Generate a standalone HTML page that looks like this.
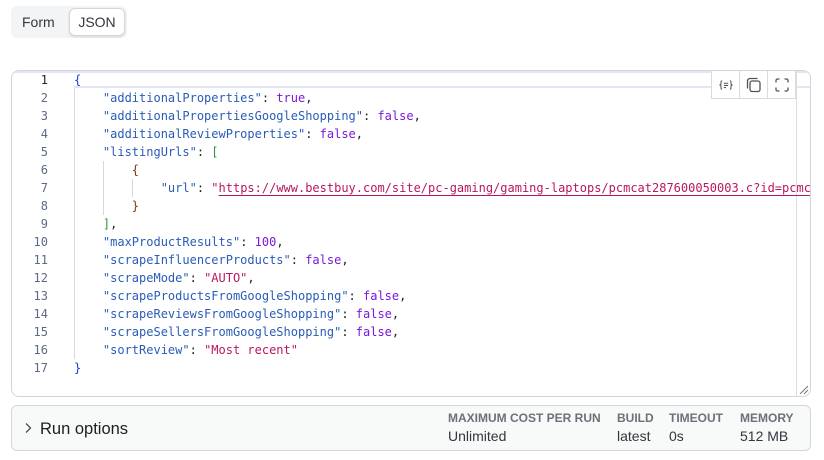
<!DOCTYPE html>
<html><head><meta charset="utf-8">
<style>
*{box-sizing:border-box}
html,body{margin:0;padding:0;background:#fff}
body{width:824px;height:460px;position:relative;overflow:hidden;font-family:"Liberation Sans",sans-serif;color:#24272e}
.abs{position:absolute}
.toggle{left:11px;top:6px;width:116px;height:32px;background:#f3f4f5;border-radius:6px}
.form{left:22px;top:14px;font-size:14px;line-height:16px;color:#33363d}
.json{left:69px;top:8px;width:56px;height:28px;background:#fff;border:1px solid #d5d7dc;border-radius:6px;box-shadow:0 1px 2px rgba(0,0,0,.12);font-size:14px;line-height:26px;text-align:center;color:#33363d}
.editor{left:11px;top:70px;width:800px;height:327px;border:1px solid #d3d5da;border-radius:8px;overflow:hidden;background:#fff}
.ln,.cd{position:absolute;font:12px/18px "DejaVu Sans Mono","Liberation Mono",monospace;white-space:pre}
.ln{width:36px;left:0;text-align:right;color:#5d6a85}
.cd{left:62px;width:736px;overflow:hidden;color:#111}
.g{position:absolute;width:1px;background:#d6d8dc}
.k{color:#2a5cb8}.b{color:#1c3ce0}.t{color:#7a18d8}.s{color:#b8185f}.p{color:#222}.gr{color:#2f8f2f}.br{color:#7a3a10}
.u{text-decoration:underline;text-decoration-skip-ink:none;text-decoration-thickness:1px;text-underline-offset:3px}
.tb{left:699px;top:0;width:85px;height:28px;background:#fff;border:1px solid #d8dade;border-top:0;display:flex}
.tb div{flex:1;border-right:1px solid #d8dade;display:flex;align-items:center;justify-content:center}
.tb div:last-child{border-right:0}
.run{left:11px;top:405px;width:800px;height:46px;background:#f8f9f9;border:1px solid #d5d7db;border-radius:6px}
.rt{left:28px;top:13px;font-size:16.5px;line-height:20px;color:#1c1e23}
.h{position:absolute;top:4px;font-size:12px;line-height:16px;font-weight:bold;color:#6c7079;white-space:nowrap}
.v{position:absolute;top:22px;font-size:14px;line-height:16px;color:#33363d;white-space:nowrap}
</style></head><body>
<div class="abs toggle"></div>
<div class="abs form">Form</div>
<div class="abs json">JSON</div>

<div class="abs editor">
<div class="abs" style="left:0;top:0;width:798px;height:2px;background:#e2e5f2"></div>
<div class="abs" style="left:62px;top:15px;width:736px;height:2px;background:#e2e5f2"></div>
<div class="g" style="left:62px;top:17px;height:271px"></div>
<div class="g" style="left:91px;top:90px;height:54px"></div>
<div class="g" style="left:120px;top:108px;height:18px"></div>
<div class="abs" style="left:784px;top:0;width:1px;height:325px;background:#dcdee2"></div>
<div class="ln" style="top:0;color:#222">1</div><div class="cd" style="top:0"><span class="b">{</span></div>
<div class="ln" style="top:18px">2</div><div class="cd" style="top:18px">    <span class="k">"additionalProperties"</span><span class="p">: </span><span class="t">true</span><span class="p">,</span></div>
<div class="ln" style="top:36px">3</div><div class="cd" style="top:36px">    <span class="k">"additionalPropertiesGoogleShopping"</span><span class="p">: </span><span class="t">false</span><span class="p">,</span></div>
<div class="ln" style="top:54px">4</div><div class="cd" style="top:54px">    <span class="k">"additionalReviewProperties"</span><span class="p">: </span><span class="t">false</span><span class="p">,</span></div>
<div class="ln" style="top:72px">5</div><div class="cd" style="top:72px">    <span class="k">"listingUrls"</span><span class="p">: </span><span class="gr">[</span></div>
<div class="ln" style="top:90px">6</div><div class="cd" style="top:90px">        <span class="br">{</span></div>
<div class="ln" style="top:108px">7</div><div class="cd" style="top:108px">            <span class="k">"url"</span><span class="p">: </span><span class="s">"<span class="u">https://www.bestbuy.com/site/pc-gaming/gaming-laptops/pcmcat287600050003.c?id=pcmcat287600050003</span></span></div>
<div class="ln" style="top:126px">8</div><div class="cd" style="top:126px">        <span class="br">}</span></div>
<div class="ln" style="top:144px">9</div><div class="cd" style="top:144px">    <span class="gr">]</span><span class="p">,</span></div>
<div class="ln" style="top:162px">10</div><div class="cd" style="top:162px">    <span class="k">"maxProductResults"</span><span class="p">: </span><span class="t">100</span><span class="p">,</span></div>
<div class="ln" style="top:180px">11</div><div class="cd" style="top:180px">    <span class="k">"scrapeInfluencerProducts"</span><span class="p">: </span><span class="t">false</span><span class="p">,</span></div>
<div class="ln" style="top:198px">12</div><div class="cd" style="top:198px">    <span class="k">"scrapeMode"</span><span class="p">: </span><span class="s">"AUTO"</span><span class="p">,</span></div>
<div class="ln" style="top:216px">13</div><div class="cd" style="top:216px">    <span class="k">"scrapeProductsFromGoogleShopping"</span><span class="p">: </span><span class="t">false</span><span class="p">,</span></div>
<div class="ln" style="top:234px">14</div><div class="cd" style="top:234px">    <span class="k">"scrapeReviewsFromGoogleShopping"</span><span class="p">: </span><span class="t">false</span><span class="p">,</span></div>
<div class="ln" style="top:252px">15</div><div class="cd" style="top:252px">    <span class="k">"scrapeSellersFromGoogleShopping"</span><span class="p">: </span><span class="t">false</span><span class="p">,</span></div>
<div class="ln" style="top:270px">16</div><div class="cd" style="top:270px">    <span class="k">"sortReview"</span><span class="p">: </span><span class="s">"Most recent"</span></div>
<div class="ln" style="top:288px">17</div><div class="cd" style="top:288px"><span class="b">}</span></div>
<div class="abs tb">
<div><svg width="14" height="12" viewBox="0 0 16 14" fill="none" stroke="#4f5359" stroke-width="1.2"><path d="M3.5 2C2 2 2.2 3 2.2 4.5S2.2 6.5 1 7c1.2.5 1.2 1 1.2 2.5S2 12 3.500 12M12.500 2C14 2 13.800 3 13.800 4.500S13.800 6.500 15 7c-1.200.5-1.200 1-1.200 2.500S14 12 12.500 12"/><path d="M5.500 5H10.500M5.500 7.500H10.500M5.500 10H8"/></svg></div>
<div><svg width="16" height="16" viewBox="0 0 16 16" fill="none" stroke="#4f5359" stroke-width="1.3"><rect x="4" y="4" width="10" height="10.500" rx="2"/><path d="M11.500 1.500H4A2.500 2.500 0 0 0 1.500 4V11.500"/></svg></div>
<div><svg width="14" height="14" viewBox="0 0 14 14" fill="none" stroke="#4f5359" stroke-width="1.300"><path d="M1 4.500V2.500A1.500 1.500 0 0 1 2.500 1H4.500M9.500 1H11.500A1.500 1.500 0 0 1 13 2.500V4.500M13 9.500V11.500A1.500 1.500 0 0 1 11.500 13H9.500M4.500 13H2.500A1.500 1.500 0 0 1 1 11.500V9.500"/></svg></div>
</div>
<svg class="abs" style="left:787px;top:314px" width="10" height="10" viewBox="0 0 10 10" fill="none" stroke="#777" stroke-width="1"><path d="M1 9L9 1M5 9L9 5"/></svg>
</div>

<div class="abs run">
<svg class="abs" style="left:12px;top:16px" width="8" height="12" viewBox="0 0 8 12" fill="none" stroke="#4a4d54" stroke-width="1.300"><path d="M2 1.500L6.500 6L2 10.500"/></svg>
<div class="abs rt">Run options</div>
<div class="h" style="left:436px">MAXIMUM COST PER RUN</div>
<div class="v" style="left:436px">Unlimited</div>
<div class="h" style="left:605px">BUILD</div>
<div class="v" style="left:605px">latest</div>
<div class="h" style="left:657px">TIMEOUT</div>
<div class="v" style="left:657px">0s</div>
<div class="h" style="left:728px">MEMORY</div>
<div class="v" style="left:728px">512 MB</div>
</div>
</body></html>
